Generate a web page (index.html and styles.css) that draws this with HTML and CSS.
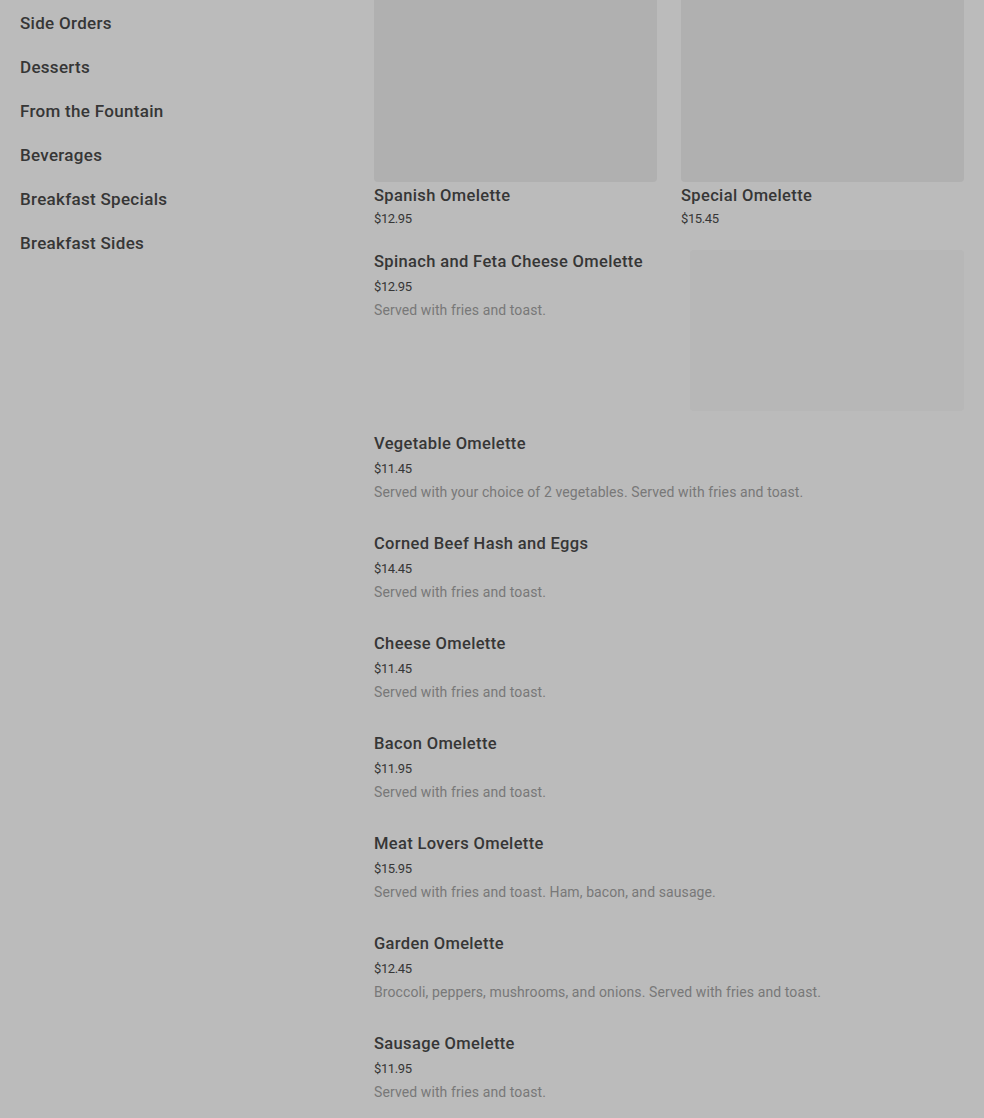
FILE: index.html
```html
<!doctype html>
<html lang="en">
	<head>
		<meta charset="UTF-8" />
		<meta name="viewport" content="width=device-width, initial-scale=1.0" />
		<title>Menu</title>
		<link rel="stylesheet" href="styles.css">
	</head>
	<body>
		<div class="page">
			<nav class="sidebar">
				<a href="#" class="nav-item">Side Orders</a>
				<a href="#" class="nav-item">Desserts</a>
				<a href="#" class="nav-item">From the Fountain</a>
				<a href="#" class="nav-item">Beverages</a>
				<a href="#" class="nav-item">Breakfast Specials</a>
				<a href="#" class="nav-item">Breakfast Sides</a>
			</nav>

			<main class="content">
				<div class="cards">
					<div class="card">
						<div class="card-image"></div>
						<div class="title">Spanish Omelette</div>
						<div class="price">$12.95</div>
					</div>
					<div class="card">
						<div class="card-image"></div>
						<div class="title">Special Omelette</div>
						<div class="price">$15.45</div>
					</div>
				</div>

				<div class="item item-with-image">
					<div>
						<div class="title">Spinach and Feta Cheese Omelette</div>
						<div class="price">$12.95</div>
						<div class="desc">Served with fries and toast.</div>
					</div>
					<div class="item-image"></div>
				</div>

				<div class="item">
					<div class="title">Vegetable Omelette</div>
					<div class="price">$11.45</div>
					<div class="desc">Served with your choice of 2 vegetables. Served with fries and toast.</div>
				</div>

				<div class="item">
					<div class="title">Corned Beef Hash and Eggs</div>
					<div class="price">$14.45</div>
					<div class="desc">Served with fries and toast.</div>
				</div>

				<div class="item">
					<div class="title">Cheese Omelette</div>
					<div class="price">$11.45</div>
					<div class="desc">Served with fries and toast.</div>
				</div>

				<div class="item">
					<div class="title">Bacon Omelette</div>
					<div class="price">$11.95</div>
					<div class="desc">Served with fries and toast.</div>
				</div>

				<div class="item">
					<div class="title">Meat Lovers Omelette</div>
					<div class="price">$15.95</div>
					<div class="desc">Served with fries and toast. Ham, bacon, and sausage.</div>
				</div>

				<div class="item">
					<div class="title">Garden Omelette</div>
					<div class="price">$12.45</div>
					<div class="desc">Broccoli, peppers, mushrooms, and onions. Served with fries and toast.</div>
				</div>

				<div class="item">
					<div class="title">Sausage Omelette</div>
					<div class="price">$11.95</div>
					<div class="desc">Served with fries and toast.</div>
				</div>
			</main>
		</div>
	</body>
</html>
```

FILE: styles.css
```css
:root {
	--color-bg: #bbbbbb;
	--color-text: #363636;
	--color-muted: #787878;
	--color-image: #b0b0b0;
	--color-image-faint: #b7b7b7;
}

body {
	margin: 0;
	background-color: var(--color-bg);
	color: var(--color-text);
	font-family: Roboto, 'Liberation Sans', sans-serif;
	font-size: 16px;
	line-height: 24px;
	overflow: hidden;
}

a {
	color: inherit;
	text-decoration: none;
}

.page {
	display: flex;
	padding-right: 20px;
}

/* Sidebar */

.sidebar {
	width: 354px;
	flex-shrink: 0;
	padding: 11px 0 0 20px;
	display: flex;
	flex-direction: column;
}

.nav-item {
	font-size: 17px;
	line-height: 24px;
	font-weight: 500;
	letter-spacing: 0.3px;
	padding-bottom: 20px;
}

/* Content */

.content {
	flex: 1;
	min-width: 0;
}

.cards {
	display: grid;
	grid-template-columns: 1fr 1fr;
	gap: 24px;
	margin-bottom: 22px;
}

.card-image {
	height: 182px;
	background-color: var(--color-image);
	border-radius: 0 0 4px 4px;
	margin-bottom: 4px;
}

.title {
	font-size: 16.5px;
	line-height: 20px;
	font-weight: 500;
	letter-spacing: 0.35px;
}

.price {
	font-size: 13px;
	line-height: 18px;
	letter-spacing: -0.4px;
	margin-top: 4px;
}

.item .price {
	margin-top: 6px;
}

.desc {
	font-size: 14px;
	line-height: 20px;
	letter-spacing: 0.1px;
	color: var(--color-muted);
	margin-top: 4px;
}

.item {
	padding-bottom: 32px;
}

.item-with-image {
	display: flex;
	justify-content: space-between;
	padding-bottom: 23px;
}

.item-with-image > div:first-child {
	padding-top: 2px;
}

.item-image {
	width: 274px;
	height: 161px;
	border-radius: 4px;
	background-color: var(--color-image-faint);
	flex-shrink: 0;
}
```
